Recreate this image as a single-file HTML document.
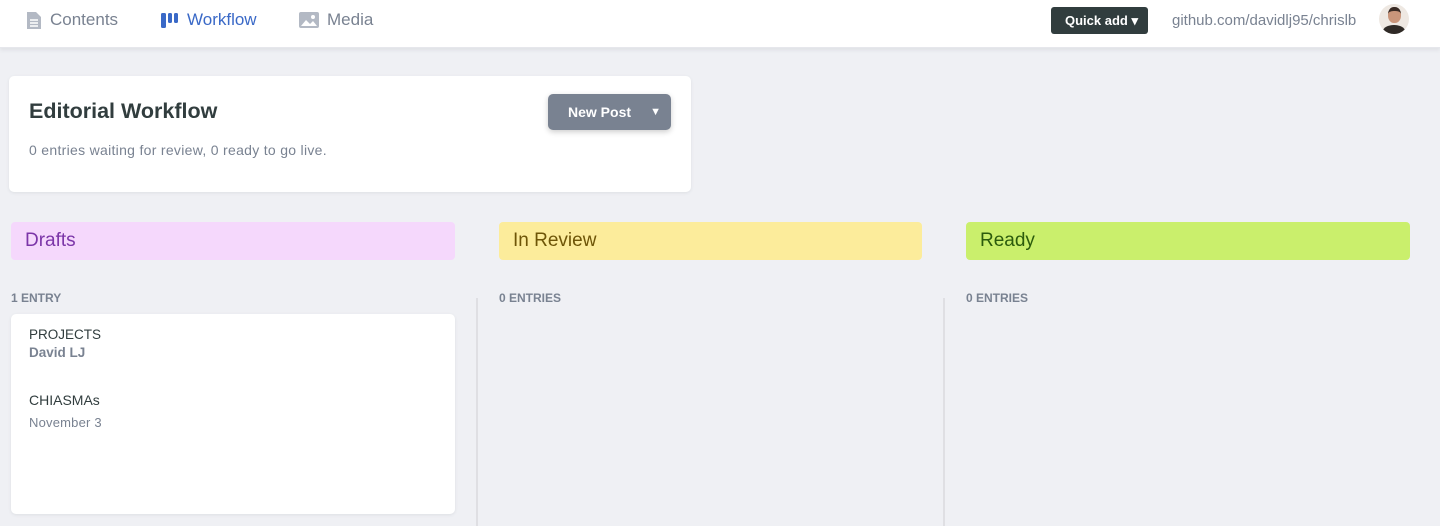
<!DOCTYPE html>
<html><head><meta charset="utf-8"><style>
*{box-sizing:border-box;margin:0;padding:0}
body{width:1440px;height:526px;overflow:hidden;background:#eff0f4;font-family:"Liberation Sans",sans-serif;position:relative}
.hdr{position:absolute;left:0;top:0;width:1440px;height:48px;background:#fff;box-shadow:0 2px 4px rgba(68,74,87,.1);border-bottom:1px solid #e6e7ec}
.nav{position:absolute;top:10px;font-size:17px;color:#798291;display:flex;align-items:center;gap:8px}
.qa{position:absolute;left:1051px;top:7px;width:97px;height:27px;background:#313d3e;border-radius:3px;color:#fff;font-size:13px;font-weight:bold;line-height:27px;padding-left:14px}
.card{position:absolute;background:#fff;border-radius:5px;box-shadow:0 1px 3px rgba(68,74,87,.1)}
.col{position:absolute;top:222px;height:38px;border-radius:4px;font-size:19px;line-height:38px;padding-left:14px}
.cnt{position:absolute;top:291px;font-size:12px;font-weight:bold;color:#798291}
.div{position:absolute;top:298px;width:2px;height:228px;background:#dfdfe3}
</style></head><body>
<div class="hdr">
 <div class="nav" style="left:26px"><svg width="16" height="19" viewBox="0 0 16 19"><path d="M1 1h9l5 5v12H1z" fill="#b3b9c4"/><path d="M4 9h8M4 12h8M4 15h8" stroke="#fff" stroke-width="1.5"/></svg>Contents</div>
 <div class="nav" style="left:161px;color:#3a69c7"><svg width="18" height="16" viewBox="0 0 18 16"><rect x="0" y="1" width="5" height="15" rx="1.5" fill="#3a69c7"/><rect x="7" y="1" width="4" height="10" rx="1.5" fill="#3a69c7"/><rect x="13" y="1" width="4" height="10" rx="1.5" fill="#3a69c7"/></svg>Workflow</div>
 <div class="nav" style="left:299px"><svg width="20" height="16" viewBox="0 0 20 16"><rect width="20" height="16" rx="2" fill="#b3b9c4"/><path d="M2 14l5-6 4 4 3-3 4 5z" fill="#fff"/><circle cx="14" cy="5" r="2" fill="#fff"/></svg>Media</div>
 <div class="qa">Quick add ▾</div>
 <div style="position:absolute;left:1172px;top:12px;font-size:15px;color:#798291">github.com/davidlj95/chrislb</div>
 <div style="position:absolute;left:1379px;top:4px;width:30px;height:30px;border-radius:50%;overflow:hidden;background:#eee8e2">
  <div style="position:absolute;left:9px;top:3px;width:13px;height:16px;border-radius:45%;background:#c9957a;border-top:4px solid #3a2b25"></div>
  <div style="position:absolute;left:4px;top:21px;width:22px;height:12px;border-radius:50% 50% 0 0;background:#2f2a26"></div>
 </div>
</div>
<div class="card" style="left:9px;top:76px;width:682px;height:116px">
 <div style="position:absolute;left:20px;top:23px;font-size:21.5px;font-weight:bold;color:#313d3e">Editorial Workflow</div>
 <div style="position:absolute;left:20px;top:66px;font-size:14px;letter-spacing:0.3px;color:#798291">0 entries waiting for review, 0 ready to go live.</div>
 <div style="position:absolute;left:539px;top:18px;width:123px;height:36px;background:#798291;border-radius:5px;box-shadow:0 2px 6px rgba(0,0,0,.2);color:#fff;font-size:14px;font-weight:bold;line-height:36px;padding-left:20px">New Post<span style="position:absolute;right:10px;font-size:11px">▼</span></div>
</div>
<div class="col" style="left:11px;width:444px;background:#f5d8fc;color:#7b35a8">Drafts</div>
<div class="col" style="left:499px;width:423px;background:#fcec9b;color:#6e5507">In Review</div>
<div class="col" style="left:966px;width:444px;background:#caef6c;color:#2b5b0c">Ready</div>
<div class="cnt" style="left:11px">1 ENTRY</div>
<div class="cnt" style="left:499px">0 ENTRIES</div>
<div class="cnt" style="left:966px">0 ENTRIES</div>
<div class="div" style="left:476px"></div>
<div class="div" style="left:943px"></div>
<div class="card" style="left:11px;top:314px;width:444px;height:200px">
 <div style="position:absolute;left:18px;top:13px;font-size:13.5px;color:#313d3e">PROJECTS</div>
 <div style="position:absolute;left:18px;top:31px;font-size:13.5px;font-weight:bold;color:#798291">David LJ</div>
 <div style="position:absolute;left:18px;top:78px;font-size:14px;color:#313d3e">CHIASMAs</div>
 <div style="position:absolute;left:18px;top:101px;font-size:13px;letter-spacing:0.2px;color:#798291">November 3</div>
</div>
</body></html>
